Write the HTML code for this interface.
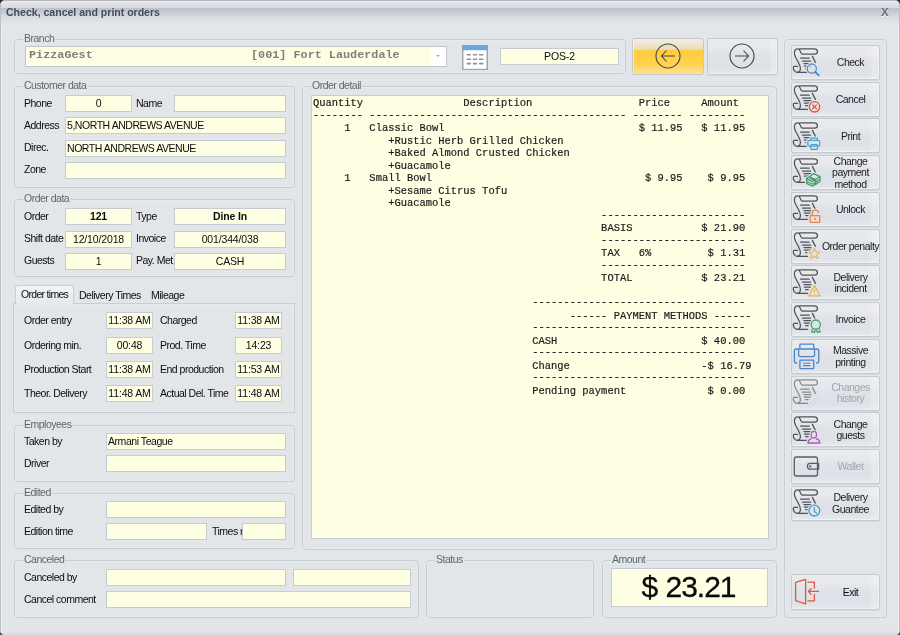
<!DOCTYPE html><html><head><meta charset="utf-8"><style>
html,body{margin:0;padding:0;}
body{width:900px;height:635px;overflow:hidden;position:relative;background:#e2e6e9;font-family:"Liberation Sans",sans-serif;}
.t{position:absolute;height:0;line-height:0;white-space:pre;will-change:transform;}
.g{position:absolute;box-sizing:border-box;border:1px solid #c9ced4;border-radius:4px;box-shadow:inset 1px 1px 0 #e8eaed,inset -1px -1px 0 #e8eaed;}
.i{position:absolute;box-sizing:border-box;border:1px solid #c6ccd5;background:#fefee3;}
.b{position:absolute;box-sizing:border-box;border:1px solid #c6cbd2;border-radius:2px;background:linear-gradient(to right,rgba(255,255,255,0) 88%,rgba(255,255,255,0.22) 93%),linear-gradient(#e9ebef 0%,#e6e8ec 28%,#dfe2e8 45%,#dee1e7 82%,#e7e9ed 100%);box-shadow:inset -1px -1px 0 #eef0f2,0 1px 0 rgba(190,195,202,0.35);}
svg{position:absolute;}
</style></head><body>

<div style="position:absolute;left:0;top:0;width:900px;height:635px;background:#2a2a2a"></div>
<div style="position:absolute;left:0;top:0;width:900px;height:635px;box-sizing:border-box;border:1px solid #b9c0ca;border-top-color:#b5b9c0;border-bottom:none;border-radius:5px 5px 0 0;background:#e2e6e9;box-shadow:inset 1px 0 0 #eceeef,inset -1px 0 0 #eceeef"></div>
<div style="position:absolute;left:2px;top:630px;width:896px;height:5px;background:linear-gradient(#e2e6e9,#d9dde2)"></div>
<svg style="left:0;top:631px" width="900" height="4"><path d="M0 1L3 4H0Z" fill="#555"/><path d="M900 1L897 4H900Z" fill="#555"/></svg>
<div style="position:absolute;left:1px;top:1px;width:898px;height:24px;border-radius:4px 4px 0 0;background:linear-gradient(#e8e9ec 0px,#d6d9dd 7px,#b9c1cb 7px,#c5cbd3 11px,#d8dce2 16px,#e3e6ea 23px)"></div>
<div class="t" style="left:6px;top:12.33px;font-size:10.6px;color:#434d5b;font-weight:bold;letter-spacing:-0.03px;font-family:'Liberation Sans', sans-serif;text-align:left;">Check, cancel and print orders</div>
<div class="t" style="left:881px;top:11.52px;font-size:13.8px;color:#6d7783;font-weight:bold;letter-spacing:0px;font-family:'Liberation Sans', sans-serif;text-align:left;text-shadow:0 1px 0 rgba(255,255,255,0.7);">x</div>
<div class="g" style="left:14px;top:39px;width:612px;height:35px"></div>
<div class="t" style="left:24px;top:32.86px;font-size:10.5px;color:#5d6671;font-weight:normal;letter-spacing:-0.5px;font-family:'Liberation Sans', sans-serif;text-align:left;"><span style="display:inline-block;line-height:11px;background:#e2e6e9;padding:0 1px;margin-left:-1px">Branch</span></div>
<div class="i" style="left:25px;top:46px;width:422px;height:21px;border-color:#bfc6d2"></div>
<div style="position:absolute;left:431px;top:47px;width:15px;height:19px;background:#fff"></div>
<div style="position:absolute;left:436px;top:55px;width:0;height:0;border-left:2.5px solid transparent;border-right:2.5px solid transparent;border-top:2.5px solid #a9adb3"></div>
<div class="t" style="left:29px;top:54.86px;font-size:11.8px;color:#7f7f7f;font-weight:bold;letter-spacing:0px;font-family:'Liberation Mono', monospace;text-align:left;">PizzaGest</div>
<div class="t" style="left:251px;top:54.86px;font-size:11.8px;color:#7f7f7f;font-weight:bold;letter-spacing:0px;font-family:'Liberation Mono', monospace;text-align:left;">[001] Fort Lauderdale</div>
<svg style="left:462px;top:45px" width="26" height="25" viewBox="0 0 26 25">
<rect x="0" y="0" width="26" height="25" fill="#a3a5a8"/>
<rect x="1.5" y="5" width="23" height="18.8" fill="#fff"/>
<rect x="0" y="0" width="26" height="5.2" fill="#6ba6df"/>
<g fill="#8e9094"><rect x="4.6" y="9" width="4.4" height="1.6" rx="0.6"/><rect x="10.8" y="9" width="4.4" height="1.6" rx="0.6"/><rect x="17" y="9" width="4.4" height="1.6" rx="0.6"/>
<rect x="4.6" y="13.4" width="4.4" height="1.6" rx="0.6"/><rect x="10.8" y="13.4" width="4.4" height="1.6" rx="0.6"/><rect x="17" y="13.4" width="4.4" height="1.6" rx="0.6"/>
<rect x="4.6" y="17.8" width="4.4" height="1.6" rx="0.6"/><rect x="10.8" y="17.8" width="4.4" height="1.6" rx="0.6"/><rect x="17" y="17.8" width="4.4" height="1.6" rx="0.6"/></g>
</svg>
<div class="i" style="left:500px;top:48px;width:119px;height:17px"></div>
<div class="t" style="left:500px;top:56.36px;font-size:10.5px;color:#0c0c0c;font-weight:normal;letter-spacing:-0.15px;font-family:'Liberation Sans', sans-serif;width:119px;text-align:center;">POS-2</div>
<div style="position:absolute;left:632px;top:38px;width:72px;height:37px;box-sizing:border-box;border:1px solid #c4c9d0;border-radius:2px;background:linear-gradient(#f1eee3 0%,#e8dcb8 30%,#ffcc3e 32%,#ffd24e 72%,#ffe396 100%);box-shadow:inset 1px 0 0 rgba(255,255,255,0.5)"></div>
<div class="b" style="left:707px;top:38px;width:71px;height:37px"></div>
<svg style="left:654px;top:42px" width="28" height="28" viewBox="0 0 28 28"><circle cx="14" cy="14" r="12" fill="none" stroke="#474747" stroke-width="1.1"/><path d="M7.5 14H21M12.5 8.5L7.5 14L12.5 19.5" fill="none" stroke="#474747" stroke-width="1.1"/></svg>
<svg style="left:728px;top:42px" width="28" height="28" viewBox="0 0 28 28"><circle cx="14" cy="14" r="12" fill="none" stroke="#474747" stroke-width="1.1"/><path d="M7 14H20.5M15.5 8.5L20.5 14L15.5 19.5" fill="none" stroke="#474747" stroke-width="1.1"/></svg>
<div class="g" style="left:14px;top:86px;width:281px;height:102px"></div>
<div class="t" style="left:24px;top:79.86px;font-size:10.5px;color:#5d6671;font-weight:normal;letter-spacing:-0.5px;font-family:'Liberation Sans', sans-serif;text-align:left;"><span style="display:inline-block;line-height:11px;background:#e2e6e9;padding:0 1px;margin-left:-1px">Customer data</span></div>
<div class="t" style="left:24px;top:103.36px;font-size:10.5px;color:#0c0c0c;font-weight:normal;letter-spacing:-0.5px;font-family:'Liberation Sans', sans-serif;text-align:left;">Phone</div>
<div class="i" style="left:65px;top:95px;width:67px;height:17px"></div>
<div class="t" style="left:65px;top:102.76px;font-size:10.5px;color:#0c0c0c;font-weight:normal;letter-spacing:-0.15px;font-family:'Liberation Sans', sans-serif;width:67px;text-align:center;">0</div>
<div class="t" style="left:136px;top:103.36px;font-size:10.5px;color:#0c0c0c;font-weight:normal;letter-spacing:-0.5px;font-family:'Liberation Sans', sans-serif;text-align:left;">Name</div>
<div class="i" style="left:174px;top:95px;width:112px;height:17px"></div>
<div class="t" style="left:24px;top:125.36px;font-size:10.5px;color:#0c0c0c;font-weight:normal;letter-spacing:-0.5px;font-family:'Liberation Sans', sans-serif;text-align:left;">Address</div>
<div class="i" style="left:65px;top:117px;width:221px;height:17px"></div>
<div class="t" style="left:67px;top:124.76px;font-size:10.5px;color:#0c0c0c;font-weight:normal;letter-spacing:-0.45px;font-family:'Liberation Sans', sans-serif;text-align:left;">5,NORTH ANDREWS AVENUE</div>
<div class="t" style="left:24px;top:147.36px;font-size:10.5px;color:#0c0c0c;font-weight:normal;letter-spacing:-0.5px;font-family:'Liberation Sans', sans-serif;text-align:left;">Direc.</div>
<div class="i" style="left:65px;top:140px;width:221px;height:17px"></div>
<div class="t" style="left:67px;top:147.76px;font-size:10.5px;color:#0c0c0c;font-weight:normal;letter-spacing:-0.45px;font-family:'Liberation Sans', sans-serif;text-align:left;">NORTH ANDREWS AVENUE</div>
<div class="t" style="left:24px;top:169.36px;font-size:10.5px;color:#0c0c0c;font-weight:normal;letter-spacing:-0.5px;font-family:'Liberation Sans', sans-serif;text-align:left;">Zone</div>
<div class="i" style="left:65px;top:162px;width:221px;height:17px"></div>
<div class="g" style="left:14px;top:199px;width:281px;height:78px"></div>
<div class="t" style="left:24px;top:192.86px;font-size:10.5px;color:#5d6671;font-weight:normal;letter-spacing:-0.5px;font-family:'Liberation Sans', sans-serif;text-align:left;"><span style="display:inline-block;line-height:11px;background:#e2e6e9;padding:0 1px;margin-left:-1px">Order data</span></div>
<div class="t" style="left:24px;top:216.36px;font-size:10.5px;color:#0c0c0c;font-weight:normal;letter-spacing:-0.5px;font-family:'Liberation Sans', sans-serif;text-align:left;">Order</div>
<div class="i" style="left:65px;top:208px;width:67px;height:17px"></div>
<div class="t" style="left:65px;top:215.76px;font-size:10.5px;color:#0c0c0c;font-weight:bold;letter-spacing:-0.15px;font-family:'Liberation Sans', sans-serif;width:67px;text-align:center;">121</div>
<div class="t" style="left:136px;top:216.36px;font-size:10.5px;color:#0c0c0c;font-weight:normal;letter-spacing:-0.5px;font-family:'Liberation Sans', sans-serif;text-align:left;">Type</div>
<div class="i" style="left:174px;top:208px;width:112px;height:17px"></div>
<div class="t" style="left:174px;top:215.76px;font-size:10.5px;color:#0c0c0c;font-weight:bold;letter-spacing:-0.15px;font-family:'Liberation Sans', sans-serif;width:112px;text-align:center;">Dine In</div>
<div class="t" style="left:24px;top:238.36px;font-size:10.5px;color:#0c0c0c;font-weight:normal;letter-spacing:-0.5px;font-family:'Liberation Sans', sans-serif;text-align:left;">Shift date</div>
<div class="i" style="left:65px;top:231px;width:67px;height:17px"></div>
<div class="t" style="left:65px;top:238.76px;font-size:10.5px;color:#0c0c0c;font-weight:normal;letter-spacing:-0.15px;font-family:'Liberation Sans', sans-serif;width:67px;text-align:center;">12/10/2018</div>
<div class="t" style="left:136px;top:238.36px;font-size:10.5px;color:#0c0c0c;font-weight:normal;letter-spacing:-0.5px;font-family:'Liberation Sans', sans-serif;text-align:left;">Invoice</div>
<div class="i" style="left:174px;top:231px;width:112px;height:17px"></div>
<div class="t" style="left:174px;top:238.76px;font-size:10.5px;color:#0c0c0c;font-weight:normal;letter-spacing:-0.15px;font-family:'Liberation Sans', sans-serif;width:112px;text-align:center;">001/344/038</div>
<div class="t" style="left:24px;top:260.36px;font-size:10.5px;color:#0c0c0c;font-weight:normal;letter-spacing:-0.5px;font-family:'Liberation Sans', sans-serif;text-align:left;">Guests</div>
<div class="i" style="left:65px;top:253px;width:67px;height:17px"></div>
<div class="t" style="left:65px;top:260.76px;font-size:10.5px;color:#0c0c0c;font-weight:normal;letter-spacing:-0.15px;font-family:'Liberation Sans', sans-serif;width:67px;text-align:center;">1</div>
<div class="t" style="left:136px;top:260.36px;font-size:10.5px;color:#0c0c0c;font-weight:normal;letter-spacing:-0.5px;font-family:'Liberation Sans', sans-serif;text-align:left;">Pay. Met</div>
<div class="i" style="left:174px;top:253px;width:112px;height:17px"></div>
<div class="t" style="left:174px;top:260.76px;font-size:10.5px;color:#0c0c0c;font-weight:normal;letter-spacing:-0.15px;font-family:'Liberation Sans', sans-serif;width:112px;text-align:center;">CASH</div>
<div class="g" style="left:13px;top:303px;width:282px;height:110px;border-radius:0"></div>
<div style="position:absolute;left:15px;top:285px;width:59px;height:19px;box-sizing:border-box;border:1px solid #c9ced4;border-bottom:none;border-radius:3px 3px 0 0;background:linear-gradient(#f3f4f6,#e6e9ed)"></div>
<div class="t" style="left:21px;top:293.66px;font-size:10.5px;color:#0c0c0c;font-weight:normal;letter-spacing:-0.7px;font-family:'Liberation Sans', sans-serif;text-align:left;">Order times</div>
<div class="t" style="left:79px;top:295.36px;font-size:10.5px;color:#0c0c0c;font-weight:normal;letter-spacing:-0.5px;font-family:'Liberation Sans', sans-serif;text-align:left;">Delivery Times</div>
<div class="t" style="left:151px;top:295.36px;font-size:10.5px;color:#0c0c0c;font-weight:normal;letter-spacing:-0.5px;font-family:'Liberation Sans', sans-serif;text-align:left;">Mileage</div>
<div class="t" style="left:24px;top:320.36px;font-size:10.5px;color:#0c0c0c;font-weight:normal;letter-spacing:-0.5px;font-family:'Liberation Sans', sans-serif;text-align:left;">Order entry</div>
<div class="i" style="left:106px;top:312px;width:47px;height:17px"></div>
<div class="t" style="left:106px;top:319.76px;font-size:10.5px;color:#0c0c0c;font-weight:normal;letter-spacing:-0.15px;font-family:'Liberation Sans', sans-serif;width:47px;text-align:center;">11:38 AM</div>
<div class="t" style="left:160px;top:320.36px;font-size:10.5px;color:#0c0c0c;font-weight:normal;letter-spacing:-0.5px;font-family:'Liberation Sans', sans-serif;text-align:left;">Charged</div>
<div class="i" style="left:235px;top:312px;width:47px;height:17px"></div>
<div class="t" style="left:235px;top:319.76px;font-size:10.5px;color:#0c0c0c;font-weight:normal;letter-spacing:-0.15px;font-family:'Liberation Sans', sans-serif;width:47px;text-align:center;">11:38 AM</div>
<div class="t" style="left:24px;top:345.36px;font-size:10.5px;color:#0c0c0c;font-weight:normal;letter-spacing:-0.5px;font-family:'Liberation Sans', sans-serif;text-align:left;">Ordering min.</div>
<div class="i" style="left:106px;top:337px;width:47px;height:17px"></div>
<div class="t" style="left:106px;top:344.76px;font-size:10.5px;color:#0c0c0c;font-weight:normal;letter-spacing:-0.15px;font-family:'Liberation Sans', sans-serif;width:47px;text-align:center;">00:48</div>
<div class="t" style="left:160px;top:345.36px;font-size:10.5px;color:#0c0c0c;font-weight:normal;letter-spacing:-0.5px;font-family:'Liberation Sans', sans-serif;text-align:left;">Prod. Time</div>
<div class="i" style="left:235px;top:337px;width:47px;height:17px"></div>
<div class="t" style="left:235px;top:344.76px;font-size:10.5px;color:#0c0c0c;font-weight:normal;letter-spacing:-0.15px;font-family:'Liberation Sans', sans-serif;width:47px;text-align:center;">14:23</div>
<div class="t" style="left:24px;top:369.36px;font-size:10.5px;color:#0c0c0c;font-weight:normal;letter-spacing:-0.5px;font-family:'Liberation Sans', sans-serif;text-align:left;">Production Start</div>
<div class="i" style="left:106px;top:361px;width:47px;height:17px"></div>
<div class="t" style="left:106px;top:368.76px;font-size:10.5px;color:#0c0c0c;font-weight:normal;letter-spacing:-0.15px;font-family:'Liberation Sans', sans-serif;width:47px;text-align:center;">11:38 AM</div>
<div class="t" style="left:160px;top:369.36px;font-size:10.5px;color:#0c0c0c;font-weight:normal;letter-spacing:-0.5px;font-family:'Liberation Sans', sans-serif;text-align:left;">End production</div>
<div class="i" style="left:235px;top:361px;width:47px;height:17px"></div>
<div class="t" style="left:235px;top:368.76px;font-size:10.5px;color:#0c0c0c;font-weight:normal;letter-spacing:-0.15px;font-family:'Liberation Sans', sans-serif;width:47px;text-align:center;">11:53 AM</div>
<div class="t" style="left:24px;top:393.36px;font-size:10.5px;color:#0c0c0c;font-weight:normal;letter-spacing:-0.5px;font-family:'Liberation Sans', sans-serif;text-align:left;">Theor. Delivery</div>
<div class="i" style="left:106px;top:385px;width:47px;height:17px"></div>
<div class="t" style="left:106px;top:392.76px;font-size:10.5px;color:#0c0c0c;font-weight:normal;letter-spacing:-0.15px;font-family:'Liberation Sans', sans-serif;width:47px;text-align:center;">11:48 AM</div>
<div class="t" style="left:160px;top:393.36px;font-size:10.5px;color:#0c0c0c;font-weight:normal;letter-spacing:-0.5px;font-family:'Liberation Sans', sans-serif;text-align:left;">Actual Del. Time</div>
<div class="i" style="left:235px;top:385px;width:47px;height:17px"></div>
<div class="t" style="left:235px;top:392.76px;font-size:10.5px;color:#0c0c0c;font-weight:normal;letter-spacing:-0.15px;font-family:'Liberation Sans', sans-serif;width:47px;text-align:center;">11:48 AM</div>
<div class="g" style="left:14px;top:425px;width:281px;height:57px"></div>
<div class="t" style="left:24px;top:418.86px;font-size:10.5px;color:#5d6671;font-weight:normal;letter-spacing:-0.5px;font-family:'Liberation Sans', sans-serif;text-align:left;"><span style="display:inline-block;line-height:11px;background:#e2e6e9;padding:0 1px;margin-left:-1px">Employees</span></div>
<div class="t" style="left:24px;top:441.36px;font-size:10.5px;color:#0c0c0c;font-weight:normal;letter-spacing:-0.5px;font-family:'Liberation Sans', sans-serif;text-align:left;">Taken by</div>
<div class="i" style="left:106px;top:433px;width:180px;height:17px"></div>
<div class="t" style="left:108px;top:440.76px;font-size:10.5px;color:#0c0c0c;font-weight:normal;letter-spacing:-0.45px;font-family:'Liberation Sans', sans-serif;text-align:left;">Armani Teague</div>
<div class="t" style="left:24px;top:463.36px;font-size:10.5px;color:#0c0c0c;font-weight:normal;letter-spacing:-0.5px;font-family:'Liberation Sans', sans-serif;text-align:left;">Driver</div>
<div class="i" style="left:106px;top:455px;width:180px;height:17px"></div>
<div class="g" style="left:14px;top:493px;width:281px;height:56px"></div>
<div class="t" style="left:24px;top:486.86px;font-size:10.5px;color:#5d6671;font-weight:normal;letter-spacing:-0.5px;font-family:'Liberation Sans', sans-serif;text-align:left;"><span style="display:inline-block;line-height:11px;background:#e2e6e9;padding:0 1px;margin-left:-1px">Edited</span></div>
<div class="t" style="left:24px;top:509.36px;font-size:10.5px;color:#0c0c0c;font-weight:normal;letter-spacing:-0.5px;font-family:'Liberation Sans', sans-serif;text-align:left;">Edited by</div>
<div class="i" style="left:106px;top:501px;width:180px;height:17px"></div>
<div class="t" style="left:24px;top:531.36px;font-size:10.5px;color:#0c0c0c;font-weight:normal;letter-spacing:-0.5px;font-family:'Liberation Sans', sans-serif;text-align:left;">Edition time</div>
<div class="i" style="left:106px;top:523px;width:101px;height:17px"></div>
<div class="t" style="left:212px;top:531.36px;font-size:10.5px;color:#0c0c0c;font-weight:normal;letter-spacing:-0.5px;font-family:'Liberation Sans', sans-serif;text-align:left;">Times r</div>
<div class="i" style="left:242px;top:523px;width:44px;height:17px"></div>
<div class="g" style="left:14px;top:560px;width:405px;height:58px"></div>
<div class="t" style="left:24px;top:553.86px;font-size:10.5px;color:#5d6671;font-weight:normal;letter-spacing:-0.5px;font-family:'Liberation Sans', sans-serif;text-align:left;"><span style="display:inline-block;line-height:11px;background:#e2e6e9;padding:0 1px;margin-left:-1px">Canceled</span></div>
<div class="t" style="left:24px;top:577.36px;font-size:10.5px;color:#0c0c0c;font-weight:normal;letter-spacing:-0.5px;font-family:'Liberation Sans', sans-serif;text-align:left;">Canceled by</div>
<div class="i" style="left:106px;top:569px;width:180px;height:17px"></div>
<div class="i" style="left:293px;top:569px;width:118px;height:17px"></div>
<div class="t" style="left:24px;top:599.36px;font-size:10.5px;color:#0c0c0c;font-weight:normal;letter-spacing:-0.5px;font-family:'Liberation Sans', sans-serif;text-align:left;">Cancel comment</div>
<div class="i" style="left:106px;top:591px;width:305px;height:17px"></div>
<div class="g" style="left:426px;top:560px;width:168px;height:58px"></div>
<div class="t" style="left:436px;top:553.86px;font-size:10.5px;color:#5d6671;font-weight:normal;letter-spacing:-0.5px;font-family:'Liberation Sans', sans-serif;text-align:left;"><span style="display:inline-block;line-height:11px;background:#e2e6e9;padding:0 1px;margin-left:-1px">Status</span></div>
<div class="g" style="left:602px;top:560px;width:175px;height:58px"></div>
<div class="t" style="left:612px;top:553.86px;font-size:10.5px;color:#5d6671;font-weight:normal;letter-spacing:-0.5px;font-family:'Liberation Sans', sans-serif;text-align:left;"><span style="display:inline-block;line-height:11px;background:#e2e6e9;padding:0 1px;margin-left:-1px">Amount</span></div>
<div class="i" style="left:611px;top:568px;width:157px;height:39px"></div>
<div class="t" style="left:610px;top:587.11px;font-size:30px;color:#0a0a0a;font-weight:normal;letter-spacing:-1.0px;font-family:'Liberation Sans', sans-serif;width:157px;text-align:center;-webkit-text-stroke:0.3px #0a0a0a;word-spacing:1px;">$ 23.21</div>
<div class="g" style="left:302px;top:86px;width:475px;height:464px"></div>
<div class="t" style="left:312px;top:79.86px;font-size:10.5px;color:#5d6671;font-weight:normal;letter-spacing:-0.5px;font-family:'Liberation Sans', sans-serif;text-align:left;"><span style="display:inline-block;line-height:11px;background:#e2e6e9;padding:0 1px;margin-left:-1px">Order detail</span></div>
<div class="i" style="left:311px;top:95px;width:458px;height:444px"></div>
<div class="t" style="left:313.3px;top:103.22px;font-size:10.45px;color:#1a1a1a;font-weight:normal;letter-spacing:0px;font-family:'Liberation Mono', monospace;text-align:left;-webkit-text-stroke:0.18px #1a1a1a;">Quantity                Description                 Price     Amount</div>
<div class="t" style="left:313.3px;top:114.72px;font-size:10.45px;color:#1a1a1a;font-weight:normal;letter-spacing:0px;font-family:'Liberation Mono', monospace;text-align:left;-webkit-text-stroke:0.18px #1a1a1a;">-------- ----------------------------------------- -------- ---------</div>
<div class="t" style="left:313.3px;top:128.22px;font-size:10.45px;color:#1a1a1a;font-weight:normal;letter-spacing:0px;font-family:'Liberation Mono', monospace;text-align:left;-webkit-text-stroke:0.18px #1a1a1a;">     1   Classic Bowl                               $ 11.95   $ 11.95</div>
<div class="t" style="left:313.3px;top:140.72px;font-size:10.45px;color:#1a1a1a;font-weight:normal;letter-spacing:0px;font-family:'Liberation Mono', monospace;text-align:left;-webkit-text-stroke:0.18px #1a1a1a;">            +Rustic Herb Grilled Chicken</div>
<div class="t" style="left:313.3px;top:153.22px;font-size:10.45px;color:#1a1a1a;font-weight:normal;letter-spacing:0px;font-family:'Liberation Mono', monospace;text-align:left;-webkit-text-stroke:0.18px #1a1a1a;">            +Baked Almond Crusted Chicken</div>
<div class="t" style="left:313.3px;top:165.72px;font-size:10.45px;color:#1a1a1a;font-weight:normal;letter-spacing:0px;font-family:'Liberation Mono', monospace;text-align:left;-webkit-text-stroke:0.18px #1a1a1a;">            +Guacamole</div>
<div class="t" style="left:313.3px;top:178.22px;font-size:10.45px;color:#1a1a1a;font-weight:normal;letter-spacing:0px;font-family:'Liberation Mono', monospace;text-align:left;-webkit-text-stroke:0.18px #1a1a1a;">     1   Small Bowl                                  $ 9.95    $ 9.95</div>
<div class="t" style="left:313.3px;top:190.72px;font-size:10.45px;color:#1a1a1a;font-weight:normal;letter-spacing:0px;font-family:'Liberation Mono', monospace;text-align:left;-webkit-text-stroke:0.18px #1a1a1a;">            +Sesame Citrus Tofu</div>
<div class="t" style="left:313.3px;top:203.22px;font-size:10.45px;color:#1a1a1a;font-weight:normal;letter-spacing:0px;font-family:'Liberation Mono', monospace;text-align:left;-webkit-text-stroke:0.18px #1a1a1a;">            +Guacamole</div>
<div class="t" style="left:313.3px;top:214.72px;font-size:10.45px;color:#1a1a1a;font-weight:normal;letter-spacing:0px;font-family:'Liberation Mono', monospace;text-align:left;-webkit-text-stroke:0.18px #1a1a1a;">                                              -----------------------</div>
<div class="t" style="left:313.3px;top:228.22px;font-size:10.45px;color:#1a1a1a;font-weight:normal;letter-spacing:0px;font-family:'Liberation Mono', monospace;text-align:left;-webkit-text-stroke:0.18px #1a1a1a;">                                              BASIS           $ 21.90</div>
<div class="t" style="left:313.3px;top:239.72px;font-size:10.45px;color:#1a1a1a;font-weight:normal;letter-spacing:0px;font-family:'Liberation Mono', monospace;text-align:left;-webkit-text-stroke:0.18px #1a1a1a;">                                              -----------------------</div>
<div class="t" style="left:313.3px;top:253.22px;font-size:10.45px;color:#1a1a1a;font-weight:normal;letter-spacing:0px;font-family:'Liberation Mono', monospace;text-align:left;-webkit-text-stroke:0.18px #1a1a1a;">                                              TAX   6%         $ 1.31</div>
<div class="t" style="left:313.3px;top:264.72px;font-size:10.45px;color:#1a1a1a;font-weight:normal;letter-spacing:0px;font-family:'Liberation Mono', monospace;text-align:left;-webkit-text-stroke:0.18px #1a1a1a;">                                              -----------------------</div>
<div class="t" style="left:313.3px;top:278.22px;font-size:10.45px;color:#1a1a1a;font-weight:normal;letter-spacing:0px;font-family:'Liberation Mono', monospace;text-align:left;-webkit-text-stroke:0.18px #1a1a1a;">                                              TOTAL           $ 23.21</div>
<div class="t" style="left:313.3px;top:302.22px;font-size:10.45px;color:#1a1a1a;font-weight:normal;letter-spacing:0px;font-family:'Liberation Mono', monospace;text-align:left;-webkit-text-stroke:0.18px #1a1a1a;">                                   ----------------------------------</div>
<div class="t" style="left:313.3px;top:315.72px;font-size:10.45px;color:#1a1a1a;font-weight:normal;letter-spacing:0px;font-family:'Liberation Mono', monospace;text-align:left;-webkit-text-stroke:0.18px #1a1a1a;">                                         ------ PAYMENT METHODS ------</div>
<div class="t" style="left:313.3px;top:327.22px;font-size:10.45px;color:#1a1a1a;font-weight:normal;letter-spacing:0px;font-family:'Liberation Mono', monospace;text-align:left;-webkit-text-stroke:0.18px #1a1a1a;">                                   ----------------------------------</div>
<div class="t" style="left:313.3px;top:340.72px;font-size:10.45px;color:#1a1a1a;font-weight:normal;letter-spacing:0px;font-family:'Liberation Mono', monospace;text-align:left;-webkit-text-stroke:0.18px #1a1a1a;">                                   CASH                       $ 40.00</div>
<div class="t" style="left:313.3px;top:352.22px;font-size:10.45px;color:#1a1a1a;font-weight:normal;letter-spacing:0px;font-family:'Liberation Mono', monospace;text-align:left;-webkit-text-stroke:0.18px #1a1a1a;">                                   ----------------------------------</div>
<div class="t" style="left:313.3px;top:365.72px;font-size:10.45px;color:#1a1a1a;font-weight:normal;letter-spacing:0px;font-family:'Liberation Mono', monospace;text-align:left;-webkit-text-stroke:0.18px #1a1a1a;">                                   Change                     -$ 16.79</div>
<div class="t" style="left:313.3px;top:377.22px;font-size:10.45px;color:#1a1a1a;font-weight:normal;letter-spacing:0px;font-family:'Liberation Mono', monospace;text-align:left;-webkit-text-stroke:0.18px #1a1a1a;">                                   ----------------------------------</div>
<div class="t" style="left:313.3px;top:390.72px;font-size:10.45px;color:#1a1a1a;font-weight:normal;letter-spacing:0px;font-family:'Liberation Mono', monospace;text-align:left;-webkit-text-stroke:0.18px #1a1a1a;">                                   Pending payment             $ 0.00</div>
<div class="g" style="left:784px;top:39px;width:103px;height:579px"></div>
<div class="b" style="left:791px;top:45px;width:89px;height:35px"></div>
<svg style="left:789.5px;top:45.20px" width="35" height="35" viewBox="0 0 35 35"><g fill="none" stroke="#505358" stroke-width="1.25" stroke-linecap="round" stroke-linejoin="round"><path d="M9.6 3.9H24.2C26.2 3.9 27.4 5.2 27.4 6.6C27.4 8 26.4 9.2 24.6 9.2H12.6C11.2 9.2 10.6 7.6 10.2 6.2C9.8 4.8 9.2 3.9 7.6 3.9C5.6 3.9 4.4 5.6 4.4 8.2C4.4 11 6.6 14 8.2 17C9.3 19 10.4 21 10.4 23.2C10.4 25.6 9.4 27.3 7.4 27.3C5 27.3 3.3 25 3.3 23C3.3 21.9 3.6 21.3 4.2 21.3H7.6"/><path d="M7.6 27.3H17.6"/><path d="M22.4 11.4L25.4 17.4"/><path d="M10.6 13.2H19.2M12.4 16H20.6M14 18.6H21M14.4 21.1H20.4M15.6 23.6H18.2"/></g><g stroke-width="3.4" stroke="#e1e4e9" fill="none" data-x="#4a8dcc" ><circle cx="21.8" cy="23.6" r="4.6"/><path d="M25.4 27.2L28.8 30.4"  stroke-linecap="round"/></g><g fill="none" stroke="#4a8dcc" stroke-width="1.3"><circle cx="21.8" cy="23.6" r="4.6"/><path d="M25.4 27.2L28.8 30.4" stroke-width="1.9" stroke-linecap="round"/></g></svg>
<div class="t" style="left:820px;top:62.16px;font-size:10.5px;color:#1c1c1c;font-weight:normal;letter-spacing:-0.5px;font-family:'Liberation Sans', sans-serif;width:61px;text-align:center;">Check</div>
<div class="b" style="left:791px;top:82px;width:89px;height:35px"></div>
<svg style="left:789.5px;top:81.93px" width="35" height="35" viewBox="0 0 35 35"><g fill="none" stroke="#505358" stroke-width="1.25" stroke-linecap="round" stroke-linejoin="round"><path d="M9.6 3.9H24.2C26.2 3.9 27.4 5.2 27.4 6.6C27.4 8 26.4 9.2 24.6 9.2H12.6C11.2 9.2 10.6 7.6 10.2 6.2C9.8 4.8 9.2 3.9 7.6 3.9C5.6 3.9 4.4 5.6 4.4 8.2C4.4 11 6.6 14 8.2 17C9.3 19 10.4 21 10.4 23.2C10.4 25.6 9.4 27.3 7.4 27.3C5 27.3 3.3 25 3.3 23C3.3 21.9 3.6 21.3 4.2 21.3H7.6"/><path d="M7.6 27.3H17.6"/><path d="M22.4 11.4L25.4 17.4"/><path d="M10.6 13.2H19.2M12.4 16H20.6M14 18.6H21M14.4 21.1H20.4M15.6 23.6H18.2"/></g><g stroke-width="3.4" stroke="#e1e4e9" fill="none" data-x="#df5540" ><circle cx="24.5" cy="24.8" r="5.2"/><path d="M22.3 22.6L26.7 27M26.7 22.6L22.3 27"/></g><g fill="none" stroke="#df5540" stroke-width="1.3"><circle cx="24.5" cy="24.8" r="5.2"/><path d="M22.3 22.6L26.7 27M26.7 22.6L22.3 27"/></g></svg>
<div class="t" style="left:820px;top:98.89px;font-size:10.5px;color:#1c1c1c;font-weight:normal;letter-spacing:-0.5px;font-family:'Liberation Sans', sans-serif;width:61px;text-align:center;">Cancel</div>
<div class="b" style="left:791px;top:118px;width:89px;height:35px"></div>
<svg style="left:789.5px;top:118.66px" width="35" height="35" viewBox="0 0 35 35"><g fill="none" stroke="#505358" stroke-width="1.25" stroke-linecap="round" stroke-linejoin="round"><path d="M9.6 3.9H24.2C26.2 3.9 27.4 5.2 27.4 6.6C27.4 8 26.4 9.2 24.6 9.2H12.6C11.2 9.2 10.6 7.6 10.2 6.2C9.8 4.8 9.2 3.9 7.6 3.9C5.6 3.9 4.4 5.6 4.4 8.2C4.4 11 6.6 14 8.2 17C9.3 19 10.4 21 10.4 23.2C10.4 25.6 9.4 27.3 7.4 27.3C5 27.3 3.3 25 3.3 23C3.3 21.9 3.6 21.3 4.2 21.3H7.6"/><path d="M7.6 27.3H17.6"/><path d="M22.4 11.4L25.4 17.4"/><path d="M10.6 13.2H19.2M12.4 16H20.6M14 18.6H21M14.4 21.1H20.4M15.6 23.6H18.2"/></g><g stroke-width="3.4" stroke="#e1e4e9" fill="none" data-x="#4aa6cc"  stroke-linejoin="round"><path d="M20.8 21.4V19.2H27.4V21.4"/><rect x="17.8" y="21.4" width="12" height="5.6" rx="1.6"/><rect x="20.8" y="25.6" width="6.6" height="4.8" rx="0.8"/></g><g fill="none" stroke="#4aa6cc" stroke-width="1.25" stroke-linejoin="round"><path d="M20.8 21.4V19.2H27.4V21.4"/><rect x="17.8" y="21.4" width="12" height="5.6" rx="1.6"/><rect x="20.8" y="25.6" width="6.6" height="4.8" rx="0.8"/></g></svg>
<div class="t" style="left:820px;top:135.62px;font-size:10.5px;color:#1c1c1c;font-weight:normal;letter-spacing:-0.5px;font-family:'Liberation Sans', sans-serif;width:61px;text-align:center;">Print</div>
<div class="b" style="left:791px;top:155px;width:89px;height:35px"></div>
<svg style="left:789.5px;top:155.39px" width="35" height="35" viewBox="0 0 35 35"><g fill="none" stroke="#505358" stroke-width="1.25" stroke-linecap="round" stroke-linejoin="round"><path d="M9.6 3.9H24.2C26.2 3.9 27.4 5.2 27.4 6.6C27.4 8 26.4 9.2 24.6 9.2H12.6C11.2 9.2 10.6 7.6 10.2 6.2C9.8 4.8 9.2 3.9 7.6 3.9C5.6 3.9 4.4 5.6 4.4 8.2C4.4 11 6.6 14 8.2 17C9.3 19 10.4 21 10.4 23.2C10.4 25.6 9.4 27.3 7.4 27.3C5 27.3 3.3 25 3.3 23C3.3 21.9 3.6 21.3 4.2 21.3H7.6"/><path d="M7.6 27.3H17.6"/><path d="M22.4 11.4L25.4 17.4"/><path d="M10.6 13.2H19.2M12.4 16H20.6M14 18.6H21M14.4 21.1H20.4M15.6 23.6H18.2"/></g><g stroke-width="3.4" stroke="#e1e4e9" fill="none" data-x="#3d9c63"  stroke-linejoin="round"><path d="M16.6 23.6L24 18.6L30 21.6L22.6 26.6Z"/><path d="M16.6 23.6V26.2L22.6 29.2L30 24.2V21.6"/><path d="M16.6 26.2V28.4L22.6 31.2L30 26.4V24.2"/><path d="M19.8 22.4L25.6 25.2" /><path d="M25.6 25.2V30" /></g><g fill="none" stroke="#3d9c63" stroke-width="1.2" stroke-linejoin="round"><path d="M16.6 23.6L24 18.6L30 21.6L22.6 26.6Z"/><path d="M16.6 23.6V26.2L22.6 29.2L30 24.2V21.6"/><path d="M16.6 26.2V28.4L22.6 31.2L30 26.4V24.2"/><path d="M19.8 22.4L25.6 25.2" stroke-width="2.2"/><path d="M25.6 25.2V30" stroke-width="1.6"/></g></svg>
<div class="t" style="left:820px;top:160.85px;font-size:10.5px;color:#1c1c1c;font-weight:normal;letter-spacing:-0.5px;font-family:'Liberation Sans', sans-serif;width:61px;text-align:center;">Change</div>
<div class="t" style="left:820px;top:172.35px;font-size:10.5px;color:#1c1c1c;font-weight:normal;letter-spacing:-0.5px;font-family:'Liberation Sans', sans-serif;width:61px;text-align:center;">payment</div>
<div class="t" style="left:820px;top:183.85px;font-size:10.5px;color:#1c1c1c;font-weight:normal;letter-spacing:-0.5px;font-family:'Liberation Sans', sans-serif;width:61px;text-align:center;">method</div>
<div class="b" style="left:791px;top:192px;width:89px;height:35px"></div>
<svg style="left:789.5px;top:192.12px" width="35" height="35" viewBox="0 0 35 35"><g fill="none" stroke="#505358" stroke-width="1.25" stroke-linecap="round" stroke-linejoin="round"><path d="M9.6 3.9H24.2C26.2 3.9 27.4 5.2 27.4 6.6C27.4 8 26.4 9.2 24.6 9.2H12.6C11.2 9.2 10.6 7.6 10.2 6.2C9.8 4.8 9.2 3.9 7.6 3.9C5.6 3.9 4.4 5.6 4.4 8.2C4.4 11 6.6 14 8.2 17C9.3 19 10.4 21 10.4 23.2C10.4 25.6 9.4 27.3 7.4 27.3C5 27.3 3.3 25 3.3 23C3.3 21.9 3.6 21.3 4.2 21.3H7.6"/><path d="M7.6 27.3H17.6"/><path d="M22.4 11.4L25.4 17.4"/><path d="M10.6 13.2H19.2M12.4 16H20.6M14 18.6H21M14.4 21.1H20.4M15.6 23.6H18.2"/></g><g stroke-width="3.4" stroke="#e1e4e9" fill="none" data-x="#e8834a" ><path d="M22.2 23.4V21.2C22.2 19.4 23.6 18.2 25.4 18.2C27.2 18.2 28.4 19.4 28.6 21"/><rect x="20.2" y="23.6" width="9.6" height="6.8" rx="0.6"/><path d="M25.2 25.8V27.8" /></g><g fill="none" stroke="#e8834a" stroke-width="1.3"><path d="M22.2 23.4V21.2C22.2 19.4 23.6 18.2 25.4 18.2C27.2 18.2 28.4 19.4 28.6 21"/><rect x="20.2" y="23.6" width="9.6" height="6.8" rx="0.6"/><path d="M25.2 25.8V27.8" stroke-width="1.8"/></g></svg>
<div class="t" style="left:820px;top:209.08px;font-size:10.5px;color:#1c1c1c;font-weight:normal;letter-spacing:-0.5px;font-family:'Liberation Sans', sans-serif;width:61px;text-align:center;">Unlock</div>
<div class="b" style="left:791px;top:229px;width:89px;height:35px"></div>
<svg style="left:789.5px;top:228.85px" width="35" height="35" viewBox="0 0 35 35"><g fill="none" stroke="#505358" stroke-width="1.25" stroke-linecap="round" stroke-linejoin="round"><path d="M9.6 3.9H24.2C26.2 3.9 27.4 5.2 27.4 6.6C27.4 8 26.4 9.2 24.6 9.2H12.6C11.2 9.2 10.6 7.6 10.2 6.2C9.8 4.8 9.2 3.9 7.6 3.9C5.6 3.9 4.4 5.6 4.4 8.2C4.4 11 6.6 14 8.2 17C9.3 19 10.4 21 10.4 23.2C10.4 25.6 9.4 27.3 7.4 27.3C5 27.3 3.3 25 3.3 23C3.3 21.9 3.6 21.3 4.2 21.3H7.6"/><path d="M7.6 27.3H17.6"/><path d="M22.4 11.4L25.4 17.4"/><path d="M10.6 13.2H19.2M12.4 16H20.6M14 18.6H21M14.4 21.1H20.4M15.6 23.6H18.2"/></g><path stroke-width="3.4" stroke="#e1e4e9" d="M24.4 19.2L26 22.8L29.9 23.1L26.9 25.6L27.9 29.5L24.4 27.4L20.9 29.5L21.9 25.6L18.9 23.1L22.8 22.8Z" fill="none" data-x="#ebb74c"  stroke-linejoin="round"/><path d="M24.4 19.2L26 22.8L29.9 23.1L26.9 25.6L27.9 29.5L24.4 27.4L20.9 29.5L21.9 25.6L18.9 23.1L22.8 22.8Z" fill="none" stroke="#ebb74c" stroke-width="1.2" stroke-linejoin="round"/></svg>
<div class="t" style="left:820px;top:245.81px;font-size:10.5px;color:#1c1c1c;font-weight:normal;letter-spacing:-0.5px;font-family:'Liberation Sans', sans-serif;width:61px;text-align:center;">Order penalty</div>
<div class="b" style="left:791px;top:265px;width:89px;height:35px"></div>
<svg style="left:789.5px;top:265.58px" width="35" height="35" viewBox="0 0 35 35"><g fill="none" stroke="#505358" stroke-width="1.25" stroke-linecap="round" stroke-linejoin="round"><path d="M9.6 3.9H24.2C26.2 3.9 27.4 5.2 27.4 6.6C27.4 8 26.4 9.2 24.6 9.2H12.6C11.2 9.2 10.6 7.6 10.2 6.2C9.8 4.8 9.2 3.9 7.6 3.9C5.6 3.9 4.4 5.6 4.4 8.2C4.4 11 6.6 14 8.2 17C9.3 19 10.4 21 10.4 23.2C10.4 25.6 9.4 27.3 7.4 27.3C5 27.3 3.3 25 3.3 23C3.3 21.9 3.6 21.3 4.2 21.3H7.6"/><path d="M7.6 27.3H17.6"/><path d="M22.4 11.4L25.4 17.4"/><path d="M10.6 13.2H19.2M12.4 16H20.6M14 18.6H21M14.4 21.1H20.4M15.6 23.6H18.2"/></g><g stroke-width="3.4" stroke="#e1e4e9" fill="none" data-x="#ecb445"  stroke-linejoin="round"><path d="M24.5 19.6L30.2 29.8H18.8Z"/><path d="M24.5 23.2V26.4M24.5 27.6V28.3"/></g><g fill="none" stroke="#ecb445" stroke-width="1.25" stroke-linejoin="round"><path d="M24.5 19.6L30.2 29.8H18.8Z"/><path d="M24.5 23.2V26.4M24.5 27.6V28.3"/></g></svg>
<div class="t" style="left:820px;top:276.79px;font-size:10.5px;color:#1c1c1c;font-weight:normal;letter-spacing:-0.5px;font-family:'Liberation Sans', sans-serif;width:61px;text-align:center;">Delivery</div>
<div class="t" style="left:820px;top:288.29px;font-size:10.5px;color:#1c1c1c;font-weight:normal;letter-spacing:-0.5px;font-family:'Liberation Sans', sans-serif;width:61px;text-align:center;">incident</div>
<div class="b" style="left:791px;top:302px;width:89px;height:35px"></div>
<svg style="left:789.5px;top:302.31px" width="35" height="35" viewBox="0 0 35 35"><g fill="none" stroke="#505358" stroke-width="1.25" stroke-linecap="round" stroke-linejoin="round"><path d="M9.6 3.9H24.2C26.2 3.9 27.4 5.2 27.4 6.6C27.4 8 26.4 9.2 24.6 9.2H12.6C11.2 9.2 10.6 7.6 10.2 6.2C9.8 4.8 9.2 3.9 7.6 3.9C5.6 3.9 4.4 5.6 4.4 8.2C4.4 11 6.6 14 8.2 17C9.3 19 10.4 21 10.4 23.2C10.4 25.6 9.4 27.3 7.4 27.3C5 27.3 3.3 25 3.3 23C3.3 21.9 3.6 21.3 4.2 21.3H7.6"/><path d="M7.6 27.3H17.6"/><path d="M22.4 11.4L25.4 17.4"/><path d="M10.6 13.2H19.2M12.4 16H20.6M14 18.6H21M14.4 21.1H20.4M15.6 23.6H18.2"/></g><g stroke-width="3.4" stroke="#e1e4e9" fill="none" data-x="#3ea56b" ><circle cx="25.8" cy="22.6" r="4.6"/><path d="M22.6 26.4L21.6 30.2L23.6 29.4L24.6 30.6L25.4 27.4M26.4 27.4L27.2 30.6L28.2 29.4L30.2 30.2L29.2 26.4"  stroke-linejoin="round"/></g><g fill="none" stroke="#3ea56b" stroke-width="1.3"><circle cx="25.8" cy="22.6" r="4.6"/><path d="M22.6 26.4L21.6 30.2L23.6 29.4L24.6 30.6L25.4 27.4M26.4 27.4L27.2 30.6L28.2 29.4L30.2 30.2L29.2 26.4" stroke-width="1.1" stroke-linejoin="round"/></g></svg>
<div class="t" style="left:820px;top:319.27px;font-size:10.5px;color:#1c1c1c;font-weight:normal;letter-spacing:-0.5px;font-family:'Liberation Sans', sans-serif;width:61px;text-align:center;">Invoice</div>
<div class="b" style="left:791px;top:339px;width:89px;height:35px"></div>
<svg style="left:789.5px;top:339.04px" width="35" height="35" viewBox="0 0 35 35"><g fill="none" stroke="#4a86c8" stroke-width="1.3" stroke-linejoin="round"><path d="M9.9 9.4V5.2H23.7V9.4"/><path d="M7.2 24H6C5 24 4.4 23.2 4.4 22.2V12C4.4 10.8 5.2 10 6.4 10H26.8C28 10 28.8 10.8 28.8 12V22.2C28.8 23.2 28.2 24 27.2 24H26"/><path d="M8.6 10V15.6C8.6 16.8 9.4 17.6 10.6 17.6H22.6C23.8 17.6 24.6 16.8 24.6 15.6V10"/><rect x="9.9" y="21.2" width="13.8" height="8.4" rx="0.6"/><path d="M13 24.2H20.4M13 26.6H20.4" stroke-width="1.1"/></g></svg>
<div class="t" style="left:820px;top:350.25px;font-size:10.5px;color:#1c1c1c;font-weight:normal;letter-spacing:-0.5px;font-family:'Liberation Sans', sans-serif;width:61px;text-align:center;">Massive</div>
<div class="t" style="left:820px;top:361.75px;font-size:10.5px;color:#1c1c1c;font-weight:normal;letter-spacing:-0.5px;font-family:'Liberation Sans', sans-serif;width:61px;text-align:center;">printing</div>
<div class="b" style="left:791px;top:376px;width:89px;height:35px"></div>
<svg style="left:789.5px;top:375.77px" width="35" height="35" viewBox="0 0 35 35"><g fill="none" stroke="#86898e" stroke-width="1.25" stroke-linecap="round" stroke-linejoin="round"><path d="M9.6 3.9H24.2C26.2 3.9 27.4 5.2 27.4 6.6C27.4 8 26.4 9.2 24.6 9.2H12.6C11.2 9.2 10.6 7.6 10.2 6.2C9.8 4.8 9.2 3.9 7.6 3.9C5.6 3.9 4.4 5.6 4.4 8.2C4.4 11 6.6 14 8.2 17C9.3 19 10.4 21 10.4 23.2C10.4 25.6 9.4 27.3 7.4 27.3C5 27.3 3.3 25 3.3 23C3.3 21.9 3.6 21.3 4.2 21.3H7.6"/><path d="M7.6 27.3H17.6"/><path d="M22.4 11.4L25.4 17.4"/><path d="M10.6 13.2H19.2M12.4 16H20.6M14 18.6H21M14.4 21.1H20.4M15.6 23.6H18.2"/></g><path d="M18.6 29.6L27.6 20.6L29.8 22.8L20.8 31.8Z" fill="none" stroke="#d4d6da" stroke-width="1"/></svg>
<div class="t" style="left:820px;top:386.98px;font-size:10.5px;color:#a3a6ab;font-weight:normal;letter-spacing:-0.5px;font-family:'Liberation Sans', sans-serif;width:61px;text-align:center;">Changes</div>
<div class="t" style="left:820px;top:398.48px;font-size:10.5px;color:#a3a6ab;font-weight:normal;letter-spacing:-0.5px;font-family:'Liberation Sans', sans-serif;width:61px;text-align:center;">history</div>
<div class="b" style="left:791px;top:412px;width:89px;height:35px"></div>
<svg style="left:789.5px;top:412.50px" width="35" height="35" viewBox="0 0 35 35"><g fill="none" stroke="#505358" stroke-width="1.25" stroke-linecap="round" stroke-linejoin="round"><path d="M9.6 3.9H24.2C26.2 3.9 27.4 5.2 27.4 6.6C27.4 8 26.4 9.2 24.6 9.2H12.6C11.2 9.2 10.6 7.6 10.2 6.2C9.8 4.8 9.2 3.9 7.6 3.9C5.6 3.9 4.4 5.6 4.4 8.2C4.4 11 6.6 14 8.2 17C9.3 19 10.4 21 10.4 23.2C10.4 25.6 9.4 27.3 7.4 27.3C5 27.3 3.3 25 3.3 23C3.3 21.9 3.6 21.3 4.2 21.3H7.6"/><path d="M7.6 27.3H17.6"/><path d="M22.4 11.4L25.4 17.4"/><path d="M10.6 13.2H19.2M12.4 16H20.6M14 18.6H21M14.4 21.1H20.4M15.6 23.6H18.2"/></g><g stroke-width="3.4" stroke="#e1e4e9" fill="none" data-x="#a95bb8"  stroke-linejoin="round"><ellipse cx="23.8" cy="21.8" rx="2.7" ry="3.4"/><path d="M21.4 25.6C19.4 26.4 18 27.6 18 29.6V30H29.8V29.6C29.8 27.6 28.4 26.4 26.2 25.6"/></g><g fill="none" stroke="#a95bb8" stroke-width="1.3" stroke-linejoin="round"><ellipse cx="23.8" cy="21.8" rx="2.7" ry="3.4"/><path d="M21.4 25.6C19.4 26.4 18 27.6 18 29.6V30H29.8V29.6C29.8 27.6 28.4 26.4 26.2 25.6"/></g></svg>
<div class="t" style="left:820px;top:423.71px;font-size:10.5px;color:#1c1c1c;font-weight:normal;letter-spacing:-0.5px;font-family:'Liberation Sans', sans-serif;width:61px;text-align:center;">Change</div>
<div class="t" style="left:820px;top:435.21px;font-size:10.5px;color:#1c1c1c;font-weight:normal;letter-spacing:-0.5px;font-family:'Liberation Sans', sans-serif;width:61px;text-align:center;">guests</div>
<div class="b" style="left:791px;top:449px;width:89px;height:35px"></div>
<svg style="left:789.5px;top:449.23px" width="35" height="35" viewBox="0 0 35 35"><g fill="none" stroke="#5a5d62" stroke-width="1.3" stroke-linejoin="round"><rect x="4.3" y="8" width="23.2" height="19" rx="2"/><path d="M27.6 14.4H20.4C18.6 14.4 17.4 15.6 17.4 17.2C17.4 18.8 18.6 20.2 20.4 20.2H28.6V14.4Z"/><circle cx="20.4" cy="17.4" r="0.5" fill="#5a5d62"/></g></svg>
<div class="t" style="left:820px;top:466.19px;font-size:10.5px;color:#a3a6ab;font-weight:normal;letter-spacing:-0.5px;font-family:'Liberation Sans', sans-serif;width:61px;text-align:center;">Wallet</div>
<div class="b" style="left:791px;top:486px;width:89px;height:35px"></div>
<svg style="left:789.5px;top:485.96px" width="35" height="35" viewBox="0 0 35 35"><g fill="none" stroke="#505358" stroke-width="1.25" stroke-linecap="round" stroke-linejoin="round"><path d="M9.6 3.9H24.2C26.2 3.9 27.4 5.2 27.4 6.6C27.4 8 26.4 9.2 24.6 9.2H12.6C11.2 9.2 10.6 7.6 10.2 6.2C9.8 4.8 9.2 3.9 7.6 3.9C5.6 3.9 4.4 5.6 4.4 8.2C4.4 11 6.6 14 8.2 17C9.3 19 10.4 21 10.4 23.2C10.4 25.6 9.4 27.3 7.4 27.3C5 27.3 3.3 25 3.3 23C3.3 21.9 3.6 21.3 4.2 21.3H7.6"/><path d="M7.6 27.3H17.6"/><path d="M22.4 11.4L25.4 17.4"/><path d="M10.6 13.2H19.2M12.4 16H20.6M14 18.6H21M14.4 21.1H20.4M15.6 23.6H18.2"/></g><g stroke-width="3.4" stroke="#e1e4e9" fill="none" data-x="#45a2cb" ><circle cx="24.4" cy="24.6" r="5.4"/><path d="M24.4 21.6V25.4L26.6 27.2" stroke-linecap="round"/></g><g fill="none" stroke="#45a2cb" stroke-width="1.3"><circle cx="24.4" cy="24.6" r="5.4"/><path d="M24.4 21.6V25.4L26.6 27.2" stroke-linecap="round"/></g></svg>
<div class="t" style="left:820px;top:497.17px;font-size:10.5px;color:#1c1c1c;font-weight:normal;letter-spacing:-0.5px;font-family:'Liberation Sans', sans-serif;width:61px;text-align:center;">Delivery</div>
<div class="t" style="left:820px;top:508.67px;font-size:10.5px;color:#1c1c1c;font-weight:normal;letter-spacing:-0.5px;font-family:'Liberation Sans', sans-serif;width:61px;text-align:center;">Guantee</div>
<div class="b" style="left:791px;top:574px;width:89px;height:36px"></div>
<svg style="left:790px;top:575px" width="35" height="35" viewBox="0 0 35 35"><g fill="none" stroke="#dc5a40" stroke-width="1.3" stroke-linejoin="round"><path d="M5.6 7.4L15.6 4.4V28.8L5.6 25.6Z"/><path d="M17.4 7.2H24.4V13.6M24.4 19V25.8H17.4"/><path d="M29 16.4H18.6M21.4 13.2L18.4 16.4L21.4 19.8"/></g></svg>
<div class="t" style="left:820px;top:592.36px;font-size:10.5px;color:#0c0c0c;font-weight:normal;letter-spacing:-0.5px;font-family:'Liberation Sans', sans-serif;width:61px;text-align:center;">Exit</div>
</body></html>
